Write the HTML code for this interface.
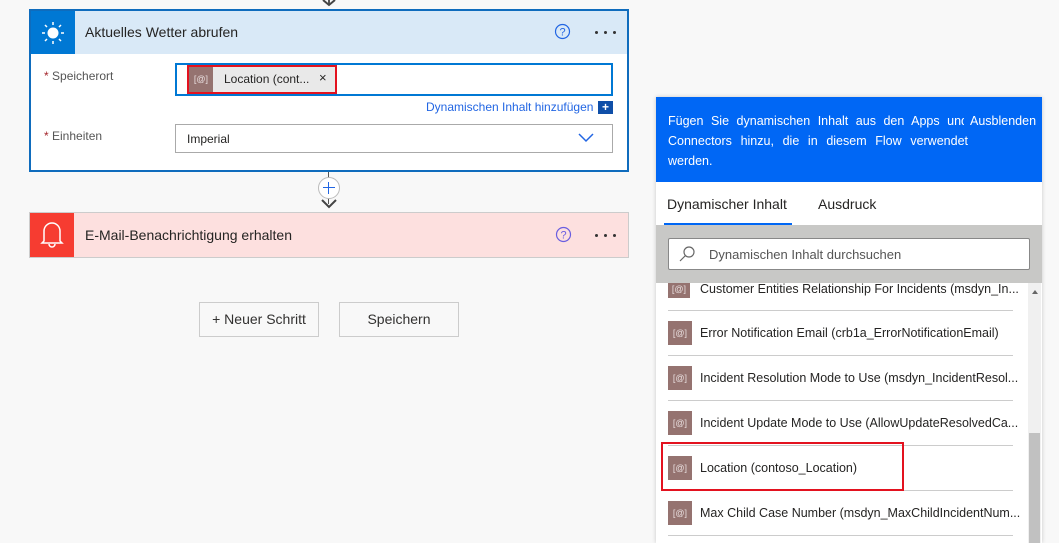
<!DOCTYPE html>
<html><head><meta charset="utf-8"><style>
*{box-sizing:border-box;margin:0;padding:0}
body{width:1059px;height:543px;background:#f8f8f8;font-family:"Liberation Sans",sans-serif;position:relative;overflow:hidden;color:#252423}
.abs{position:absolute}
.t{font-size:12.5px}
.ic{position:absolute;width:20px;height:20px;background:#957370;color:#e8dede;font-size:9px;text-align:center;line-height:20px}
.dots{position:absolute;width:24px;height:4px}
.dots i{position:absolute;top:0;width:3px;height:3px;background:#333;border-radius:50%}
</style></head><body>
<div class="abs" style="left:328px;top:0;width:2px;height:4px;background:#555"></div>
<svg class="abs" style="left:321px;top:0" width="16" height="8"><path d="M2 0 L8 5 L14 0" stroke="#444" stroke-width="2" fill="none"/></svg>

<div class="abs" style="left:29px;top:9px;width:600px;height:163px;border:2px solid #0f6cbd;background:#fff"></div>
<div class="abs" style="left:31px;top:11px;width:596px;height:43px;background:#d9e9f7"></div>
<div class="abs" style="left:31px;top:11px;width:44px;height:43px;background:#0078d4"></div>
<svg class="abs" style="left:38px;top:18px" width="30" height="30" viewBox="0 0 30 30"><circle cx="15" cy="15" r="5.5" fill="#fff"/><g stroke="#fff" stroke-width="1.5"><path d="M15 4v3M15 23v3M4 15h3M23 15h3M7 7l2 2M21 21l2 2M7 23l2-2M21 9l2-2"/></g></svg>
<div class="abs" style="left:85px;top:24px;font-size:14px">Aktuelles Wetter abrufen</div>
<svg class="abs" style="left:554px;top:23px" width="17" height="17"><circle cx="8.5" cy="8.5" r="7" stroke="#2266e3" stroke-width="1.2" fill="none"/><text x="8.5" y="12.5" font-size="11" fill="#2266e3" text-anchor="middle" font-family="Liberation Sans">?</text></svg>
<div class="dots" style="left:595px;top:31px"><i style="left:0"></i><i style="left:9px"></i><i style="left:18px"></i></div>
<div class="abs" style="left:44px;top:69px;font-size:12px;color:#555"><span style="color:#a4262c">* </span>Speicherort</div>
<div class="abs" style="left:175px;top:63px;width:438px;height:33px;border:2px solid #0078d4"></div>
<div class="abs" style="left:187px;top:65px;width:150px;height:29px;border:2px solid #e3121f;background:#e9e9e9"></div>
<div class="ic" style="left:189px;top:67px;width:24px;height:25px;line-height:25px">[@]</div>
<div class="abs" style="left:224px;top:72px;font-size:12px">Location (cont...</div>
<div class="abs" style="left:319px;top:70px;font-size:13px">×</div>
<div class="abs" style="left:426px;top:100px;font-size:12px;color:#2266e3">Dynamischen Inhalt hinzufügen</div>
<div class="abs" style="left:598px;top:101px;width:15px;height:13px;background:#0f4fa8;color:#fff;font-size:12px;line-height:13px;text-align:center;font-weight:bold">+</div>
<div class="abs" style="left:44px;top:129px;font-size:12px;color:#555"><span style="color:#a4262c">* </span>Einheiten</div>
<div class="abs" style="left:175px;top:124px;width:438px;height:29px;border:1px solid #aaa;background:#fff"></div>
<div class="abs" style="left:187px;top:132px;font-size:12px">Imperial</div>
<svg class="abs" style="left:578px;top:133px" width="16" height="10"><path d="M1 1 L8 8 L15 1" stroke="#2266e3" stroke-width="1.5" fill="none"/></svg>

<div class="abs" style="left:328px;top:172px;width:1px;height:32px;background:#555"></div>
<div class="abs" style="left:318px;top:177px;width:22px;height:22px;border:1px solid #bbb;border-radius:50%;background:#fff"></div>
<div class="abs" style="left:323px;top:187px;width:12px;height:1px;background:#2266e3"></div>
<div class="abs" style="left:328px;top:182px;width:1px;height:12px;background:#2266e3"></div>
<svg class="abs" style="left:320px;top:199px" width="18" height="12"><path d="M2 1 L9 8 L16 1" stroke="#444" stroke-width="2" fill="none"/></svg>

<div class="abs" style="left:29px;top:212px;width:600px;height:46px;border:1px solid #ccc;background:#fde0df"></div>
<div class="abs" style="left:30px;top:213px;width:44px;height:44px;background:#f63c31"></div>
<svg class="abs" style="left:40px;top:219px" width="24" height="32" viewBox="0 0 24 32"><path d="M4 22 L4 12 A8 8 0 0 1 20 12 L20 22 L22 24 L2 24 Z" stroke="#fff" stroke-width="1.5" fill="none"/><path d="M9 25 A3 3 0 0 0 15 25" stroke="#fff" stroke-width="1.5" fill="none"/></svg>
<div class="abs" style="left:85px;top:227px;font-size:14px">E-Mail-Benachrichtigung erhalten</div>
<svg class="abs" style="left:555px;top:226px" width="17" height="17"><circle cx="8.5" cy="8.5" r="7" stroke="#6a5ee0" stroke-width="1.2" fill="none"/><text x="8.5" y="12.5" font-size="11" fill="#6a5ee0" text-anchor="middle" font-family="Liberation Sans">?</text></svg>
<div class="dots" style="left:595px;top:234px"><i style="left:0"></i><i style="left:9px"></i><i style="left:18px"></i></div>

<div class="abs" style="left:199px;top:302px;width:120px;height:35px;border:1px solid #ccc;font-size:14px;text-align:center;line-height:33px;color:#323130">+ Neuer Schritt</div>
<div class="abs" style="left:339px;top:302px;width:120px;height:35px;border:1px solid #ccc;font-size:14px;text-align:center;line-height:33px;color:#323130">Speichern</div>

<div class="abs" style="left:656px;top:97px;width:386px;height:446px;background:#fff;box-shadow:0 0 4px rgba(0,0,0,.2)"></div>
<div class="abs" style="left:656px;top:97px;width:386px;height:85px;background:#0067f5"></div>
<div class="abs" style="left:668px;top:111px;width:300px;color:#fff;font-size:12.5px;line-height:20px;text-align:justify;word-spacing:3px">Fügen Sie dynamischen Inhalt aus den Apps und Connectors hinzu, die in diesem Flow verwendet werden.</div>
<div class="abs" style="left:964px;top:111px;width:78px;height:22px;background:#0067f5;color:#fff;font-size:12.5px;line-height:20px;padding-left:6px">Ausblenden</div>
<div class="abs" style="left:667px;top:196px;font-size:14px">Dynamischer Inhalt</div>
<div class="abs" style="left:818px;top:196px;font-size:14px">Ausdruck</div>
<div class="abs" style="left:664px;top:223px;width:128px;height:2px;background:#0067f5"></div>
<div class="abs" style="left:656px;top:225px;width:386px;height:58px;background:#c8c8c6"></div>
<div class="abs" style="left:668px;top:238px;width:362px;height:32px;background:#fff;border:1px solid #888;border-radius:2px"></div>
<svg class="abs" style="left:678px;top:245px" width="18" height="18"><circle cx="11" cy="7" r="5" stroke="#666" fill="none" stroke-width="1.2"/><path d="M7.5 10.5 L2 16" stroke="#666" stroke-width="1.2"/></svg>
<div class="abs" style="left:709px;top:247px;font-size:13px;color:#555">Dynamischen Inhalt durchsuchen</div>

<div class="abs" style="left:656px;top:283px;width:386px;height:260px;overflow:hidden">
 <div class="ic" style="left:12px;top:-3px;width:22px;height:18px;line-height:18px">[@]</div>
 <div class="abs t" style="left:44px;top:-1px">Customer Entities Relationship For Incidents (msdyn_In...</div>
 <div class="abs" style="left:12px;top:27px;width:345px;height:1px;background:#ccc"></div>
 <div class="ic" style="left:12px;top:38px;width:24px;height:24px;line-height:24px">[@]</div>
 <div class="abs t" style="left:44px;top:43px">Error Notification Email (crb1a_ErrorNotificationEmail)</div>
 <div class="abs" style="left:12px;top:72px;width:345px;height:1px;background:#ccc"></div>
 <div class="ic" style="left:12px;top:83px;width:24px;height:24px;line-height:24px">[@]</div>
 <div class="abs t" style="left:44px;top:88px">Incident Resolution Mode to Use (msdyn_IncidentResol...</div>
 <div class="abs" style="left:12px;top:117px;width:345px;height:1px;background:#ccc"></div>
 <div class="ic" style="left:12px;top:128px;width:24px;height:24px;line-height:24px">[@]</div>
 <div class="abs t" style="left:44px;top:133px">Incident Update Mode to Use (AllowUpdateResolvedCa...</div>
 <div class="abs" style="left:12px;top:162px;width:345px;height:1px;background:#ccc"></div>
 <div class="ic" style="left:12px;top:173px;width:24px;height:24px;line-height:24px">[@]</div>
 <div class="abs t" style="left:44px;top:178px">Location (contoso_Location)</div>
 <div class="abs" style="left:12px;top:207px;width:345px;height:1px;background:#ccc"></div>
 <div class="ic" style="left:12px;top:218px;width:24px;height:24px;line-height:24px">[@]</div>
 <div class="abs t" style="left:44px;top:223px">Max Child Case Number (msdyn_MaxChildIncidentNum...</div>
 <div class="abs" style="left:12px;top:252px;width:345px;height:1px;background:#ccc"></div>
 <div class="abs" style="left:372px;top:0;width:13px;height:260px;background:#f0f0f0"></div>
 <div class="abs" style="left:376px;top:7px;width:0;height:0;border-left:3px solid transparent;border-right:3px solid transparent;border-bottom:4px solid #666"></div>
 <div class="abs" style="left:373px;top:150px;width:11px;height:110px;background:#c1c1c1"></div>
</div>
<div class="abs" style="left:661px;top:442px;width:243px;height:49px;border:2px solid #e3121f"></div>
</body></html>
